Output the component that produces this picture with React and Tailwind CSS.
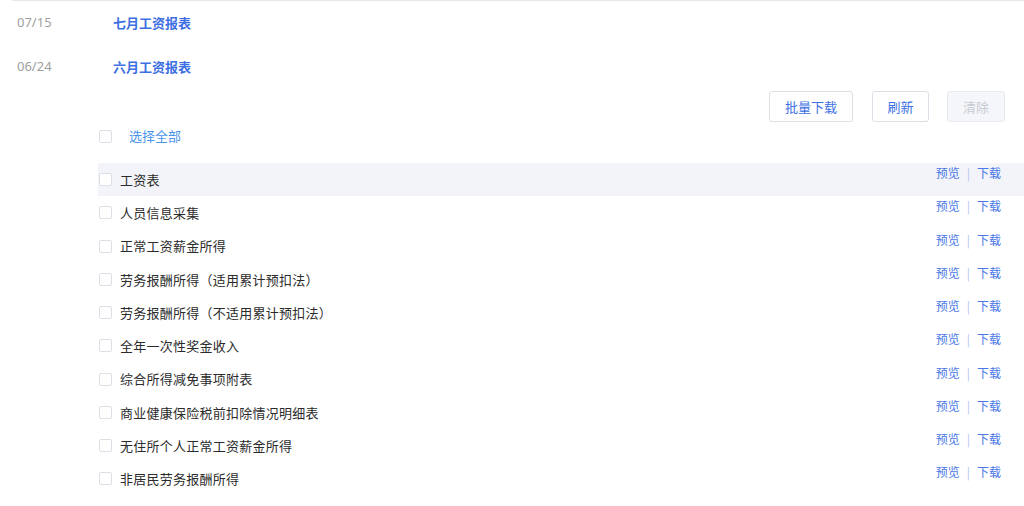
const reports = [
  { date: '07/15', title: '七月工资报表' },
  { date: '06/24', title: '六月工资报表' },
];

const files = [
  '工资表',
  '人员信息采集',
  '正常工资薪金所得',
  '劳务报酬所得（适用累计预扣法）',
  '劳务报酬所得（不适用累计预扣法）',
  '全年一次性奖金收入',
  '综合所得减免事项附表',
  '商业健康保险税前扣除情况明细表',
  '无住所个人正常工资薪金所得',
  '非居民劳务报酬所得',
];

const Checkbox = () => (
  <span className="block w-[13px] h-[13px] shrink-0 rounded-[2px] border border-[#dcdfe6] bg-white" />
);

export default function App() {
  return (
    <div className="w-[1024px] h-[506px] overflow-hidden bg-white text-[13px] text-[#2b2b2b] font-['Noto_Sans_CJK_SC','Noto_Sans',sans-serif]">
      <div className="ml-[12px] border-t border-[#e6e8ee]" />

      {reports.map((r) => (
        <div key={r.date} className="flex items-center h-[45px] -mt-px first:mt-0">
          <span className="w-[113px] pl-[17px] text-[#a0a0a0] font-['Noto_Sans',sans-serif]">{r.date}</span>
          <span className="font-semibold text-[#3d6fe3]">{r.title}</span>
        </div>
      ))}

      <div className="flex justify-end pr-[19px] mt-[2px]">
        <button className="w-[84px] h-[31px] mr-[19px] rounded-[3px] border border-[#dcdfe6] bg-white text-[#3d6fe3]">批量下载</button>
        <button className="w-[57px] h-[31px] mr-[18px] rounded-[3px] border border-[#dcdfe6] bg-white text-[#3d6fe3]">刷新</button>
        <button className="w-[58px] h-[31px] rounded-[3px] border border-[#e8eaf0] bg-[#f5f6fa] text-[#c8cbd3]">清除</button>
      </div>

      <div className="flex items-center h-[28px] pl-[99px] gap-[17px]">
        <Checkbox />
        <span className="text-[#4a95ea]">选择全部</span>
      </div>

      <div className="mt-[13px] ml-[98px]">
        {files.map((f, i) => (
          <div key={f} className={`flex justify-between h-[33.25px] ${i === 0 ? 'bg-[#f3f4f9]' : ''}`}>
            <div className="flex items-center gap-[8px] pl-[1px]">
              <Checkbox />
              <span className="tracking-[0.25px]">{f}</span>
            </div>
            <div className="flex items-start pr-[23px] text-[12px] leading-[20px] text-[#4a78e8]">
              <span>预览</span>
              <span className="px-[7px] text-[#b4c2ee]">|</span>
              <span>下载</span>
            </div>
          </div>
        ))}
      </div>
    </div>
  );
}
